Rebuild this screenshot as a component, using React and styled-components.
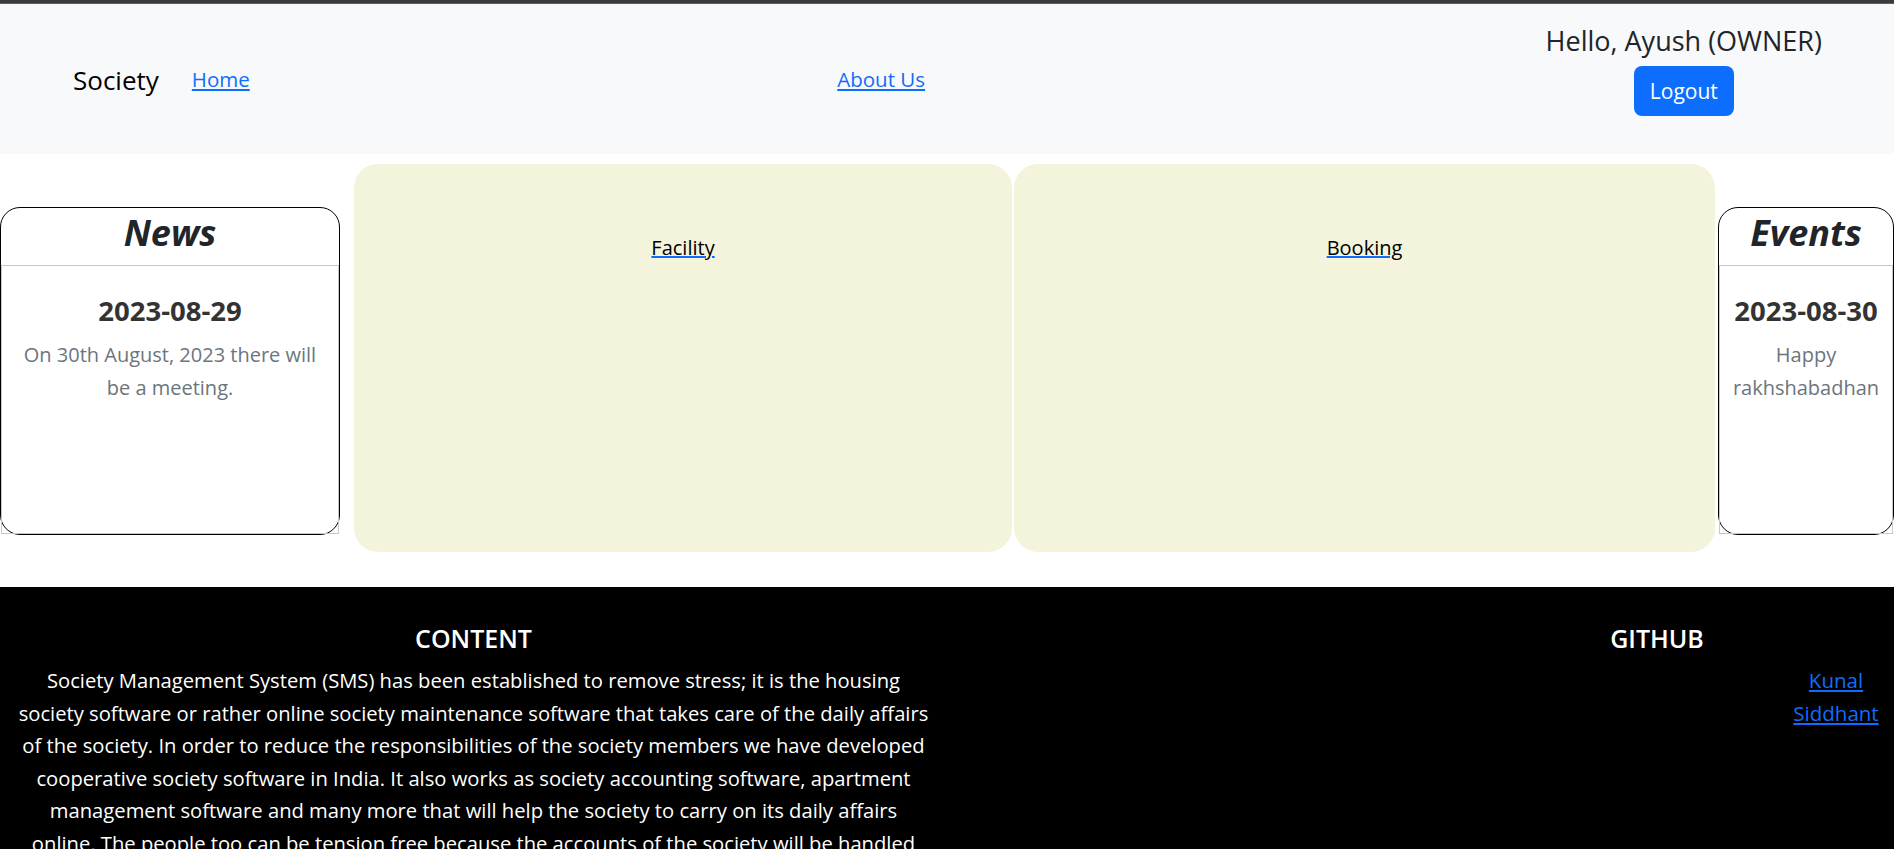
import styled, { createGlobalStyle } from "styled-components";

const GlobalStyle = createGlobalStyle`
    body {
        margin: 0;
        background: #fff;
        font-family: "Open Sans", "Liberation Sans", sans-serif;
        color: #212529;
    }
    * { box-sizing: border-box; }
`;

const news = { title: "News", date: "2023-08-29", text: "On 30th August, 2023 there will be a meeting." };
const events = { title: "Events", date: "2023-08-30", text: "Happy rakhshabadhan" };

//Texto del pie, cortado igual que en la captura
const footerLines = [
    "Society Management System (SMS) has been established to remove stress; it is the housing",
    "society software or rather online society maintenance software that takes care of the daily affairs",
    "of the society. In order to reduce the responsibilities of the society members we have developed",
    "cooperative society software in India. It also works as society accounting software, apartment",
    "management software and many more that will help the society to carry on its daily affairs",
    "online. The people too can be tension free because the accounts of the society will be handled",
    "online and they can get the details whenever they want.",
];

//Tarjeta lateral (noticias / eventos)
const SideCard = ({ item, width, ml }) => (
    <Card $width={width} $ml={ml}>
        <CardHeader>{item.title}</CardHeader>
        <CardBody>
            <CardDate>{item.date}</CardDate>
            <CardText>{item.text}</CardText>
        </CardBody>
    </Card>
);

const App = () => {
    return (
        <>
            <GlobalStyle />
            <TopBar />
            <Nav>
                <Brand>Society</Brand>
                <NavLink href="#">Home</NavLink>
                <Middle>
                    <NavLink href="#">About Us</NavLink>
                </Middle>
                <UserBlock>
                    <Hello>Hello, Ayush (OWNER)</Hello>
                    <LogoutButton>Logout</LogoutButton>
                </UserBlock>
            </Nav>

            <Main>
                <SideCard item={news} width={340} ml={0} />
                <Tile $width={658} $ml={14}>
                    <TileLink href="#">Facility</TileLink>
                </Tile>
                <Tile $width={701} $ml={2}>
                    <TileLink href="#">Booking</TileLink>
                </Tile>
                <SideCard item={events} width={176} ml={3} />
            </Main>

            <Footer>
                <FooterCol $width={947}>
                    <FooterTitle>CONTENT</FooterTitle>
                    <FooterText>
                        {footerLines.map((line, i) => (
                            <span key={i}>{line}{i < footerLines.length - 1 && <br />}</span>
                        ))}
                    </FooterText>
                </FooterCol>
                <FooterCol $width={473} />
                <FooterCol $width={474}>
                    <FooterTitle>GITHUB</FooterTitle>
                    <LinkList>
                        <li><FooterLink href="#">Kunal</FooterLink></li>
                        <li><FooterLink href="#">Siddhant</FooterLink></li>
                    </LinkList>
                </FooterCol>
            </Footer>
        </>
    );
};

export default App;

//Estilos
const TopBar = styled.div`
    height: 4px;
    background: #3a3a3c;
    border-bottom: 1px solid #5e5f62;
`;

const Nav = styled.nav`
    display: flex;
    align-items: center;
    height: 150px;
    padding: 0 72px 0 73px;
    background: #f8f9fa;
`;

const Brand = styled.span`
    font-size: 26px;
    color: #000;
    margin-top: 2px;
`;

const NavLink = styled.a`
    font-size: 20.5px;
    color: #0d6efd;
    text-decoration: underline;
    margin-left: 33px;
`;

const Middle = styled.div`
    flex: 1;
    display: flex;
    justify-content: center;
    padding-right: 33px;

    a { margin-left: 0; }
`;

const UserBlock = styled.div`
    align-self: flex-start;
    display: flex;
    flex-direction: column;
    align-items: center;
    padding-top: 20px;
    gap: 8px;
`;

const Hello = styled.h4`
    margin: 0;
    font-size: 27px;
    line-height: 34px;
    font-weight: 500;
    color: #212529;
`;

const LogoutButton = styled.button`
    height: 50px;
    padding: 0 16px;
    border: none;
    border-radius: 8px;
    background: #0d6efd;
    color: #fff;
    font-family: inherit;
    font-size: 21px;
`;

const Main = styled.main`
    display: flex;
    align-items: flex-start;
    padding: 10px 0 35px;
`;

const Card = styled.div`
    display: flex;
    flex-direction: column;
    flex-shrink: 0;
    width: ${p => p.$width}px;
    height: 328px;
    margin: 43px 0 0 ${p => p.$ml}px;
    border: 1px solid #000;
    border-radius: 20px;
    background: #fff;
`;

const CardHeader = styled.h2`
    margin: 0;
    height: 57px;
    line-height: 50px;
    text-align: center;
    font-size: 36px;
    font-style: italic;
    font-weight: 700;
    color: #212529;
`;

const CardBody = styled.div`
    flex: 1;
    border: 1px solid #c8c8c8;
    padding: 28px 8px 0;
    text-align: center;
`;

const CardDate = styled.h4`
    margin: 0 0 10px;
    font-size: 27.5px;
    line-height: 34px;
    font-weight: 700;
    color: #333;
`;

const CardText = styled.p`
    margin: 0;
    font-size: 20px;
    line-height: 33px;
    color: #6c757d;
`;

const Tile = styled.div`
    flex-shrink: 0;
    width: ${p => p.$width}px;
    height: 388px;
    margin-left: ${p => p.$ml}px;
    padding-top: 70px;
    border-radius: 24px;
    background: #f4f4dd;
    text-align: center;
`;

const TileLink = styled.a`
    font-size: 20px;
    color: #000;
    text-decoration: underline;
    text-decoration-color: #0d6efd;
`;

const Footer = styled.footer`
    display: flex;
    background: #000;
    color: #fff;
    padding: 35px 0 40px;
`;

const FooterCol = styled.div`
    flex-shrink: 0;
    width: ${p => p.$width}px;
    text-align: center;
`;

const FooterTitle = styled.h5`
    margin: 0 0 10px;
    font-size: 25px;
    line-height: 32px;
    font-weight: 600;
`;

const FooterText = styled.p`
    margin: 0;
    white-space: nowrap;
    font-size: 20.2px;
    line-height: 32.5px;
`;

const LinkList = styled.ul`
    list-style: none;
    margin: 0 0 0 auto;
    padding: 0;
    width: 116px;
    font-size: 20.5px;
    line-height: 32.5px;
`;

const FooterLink = styled.a`
    color: #0d6efd;
    text-decoration: underline;
`;
